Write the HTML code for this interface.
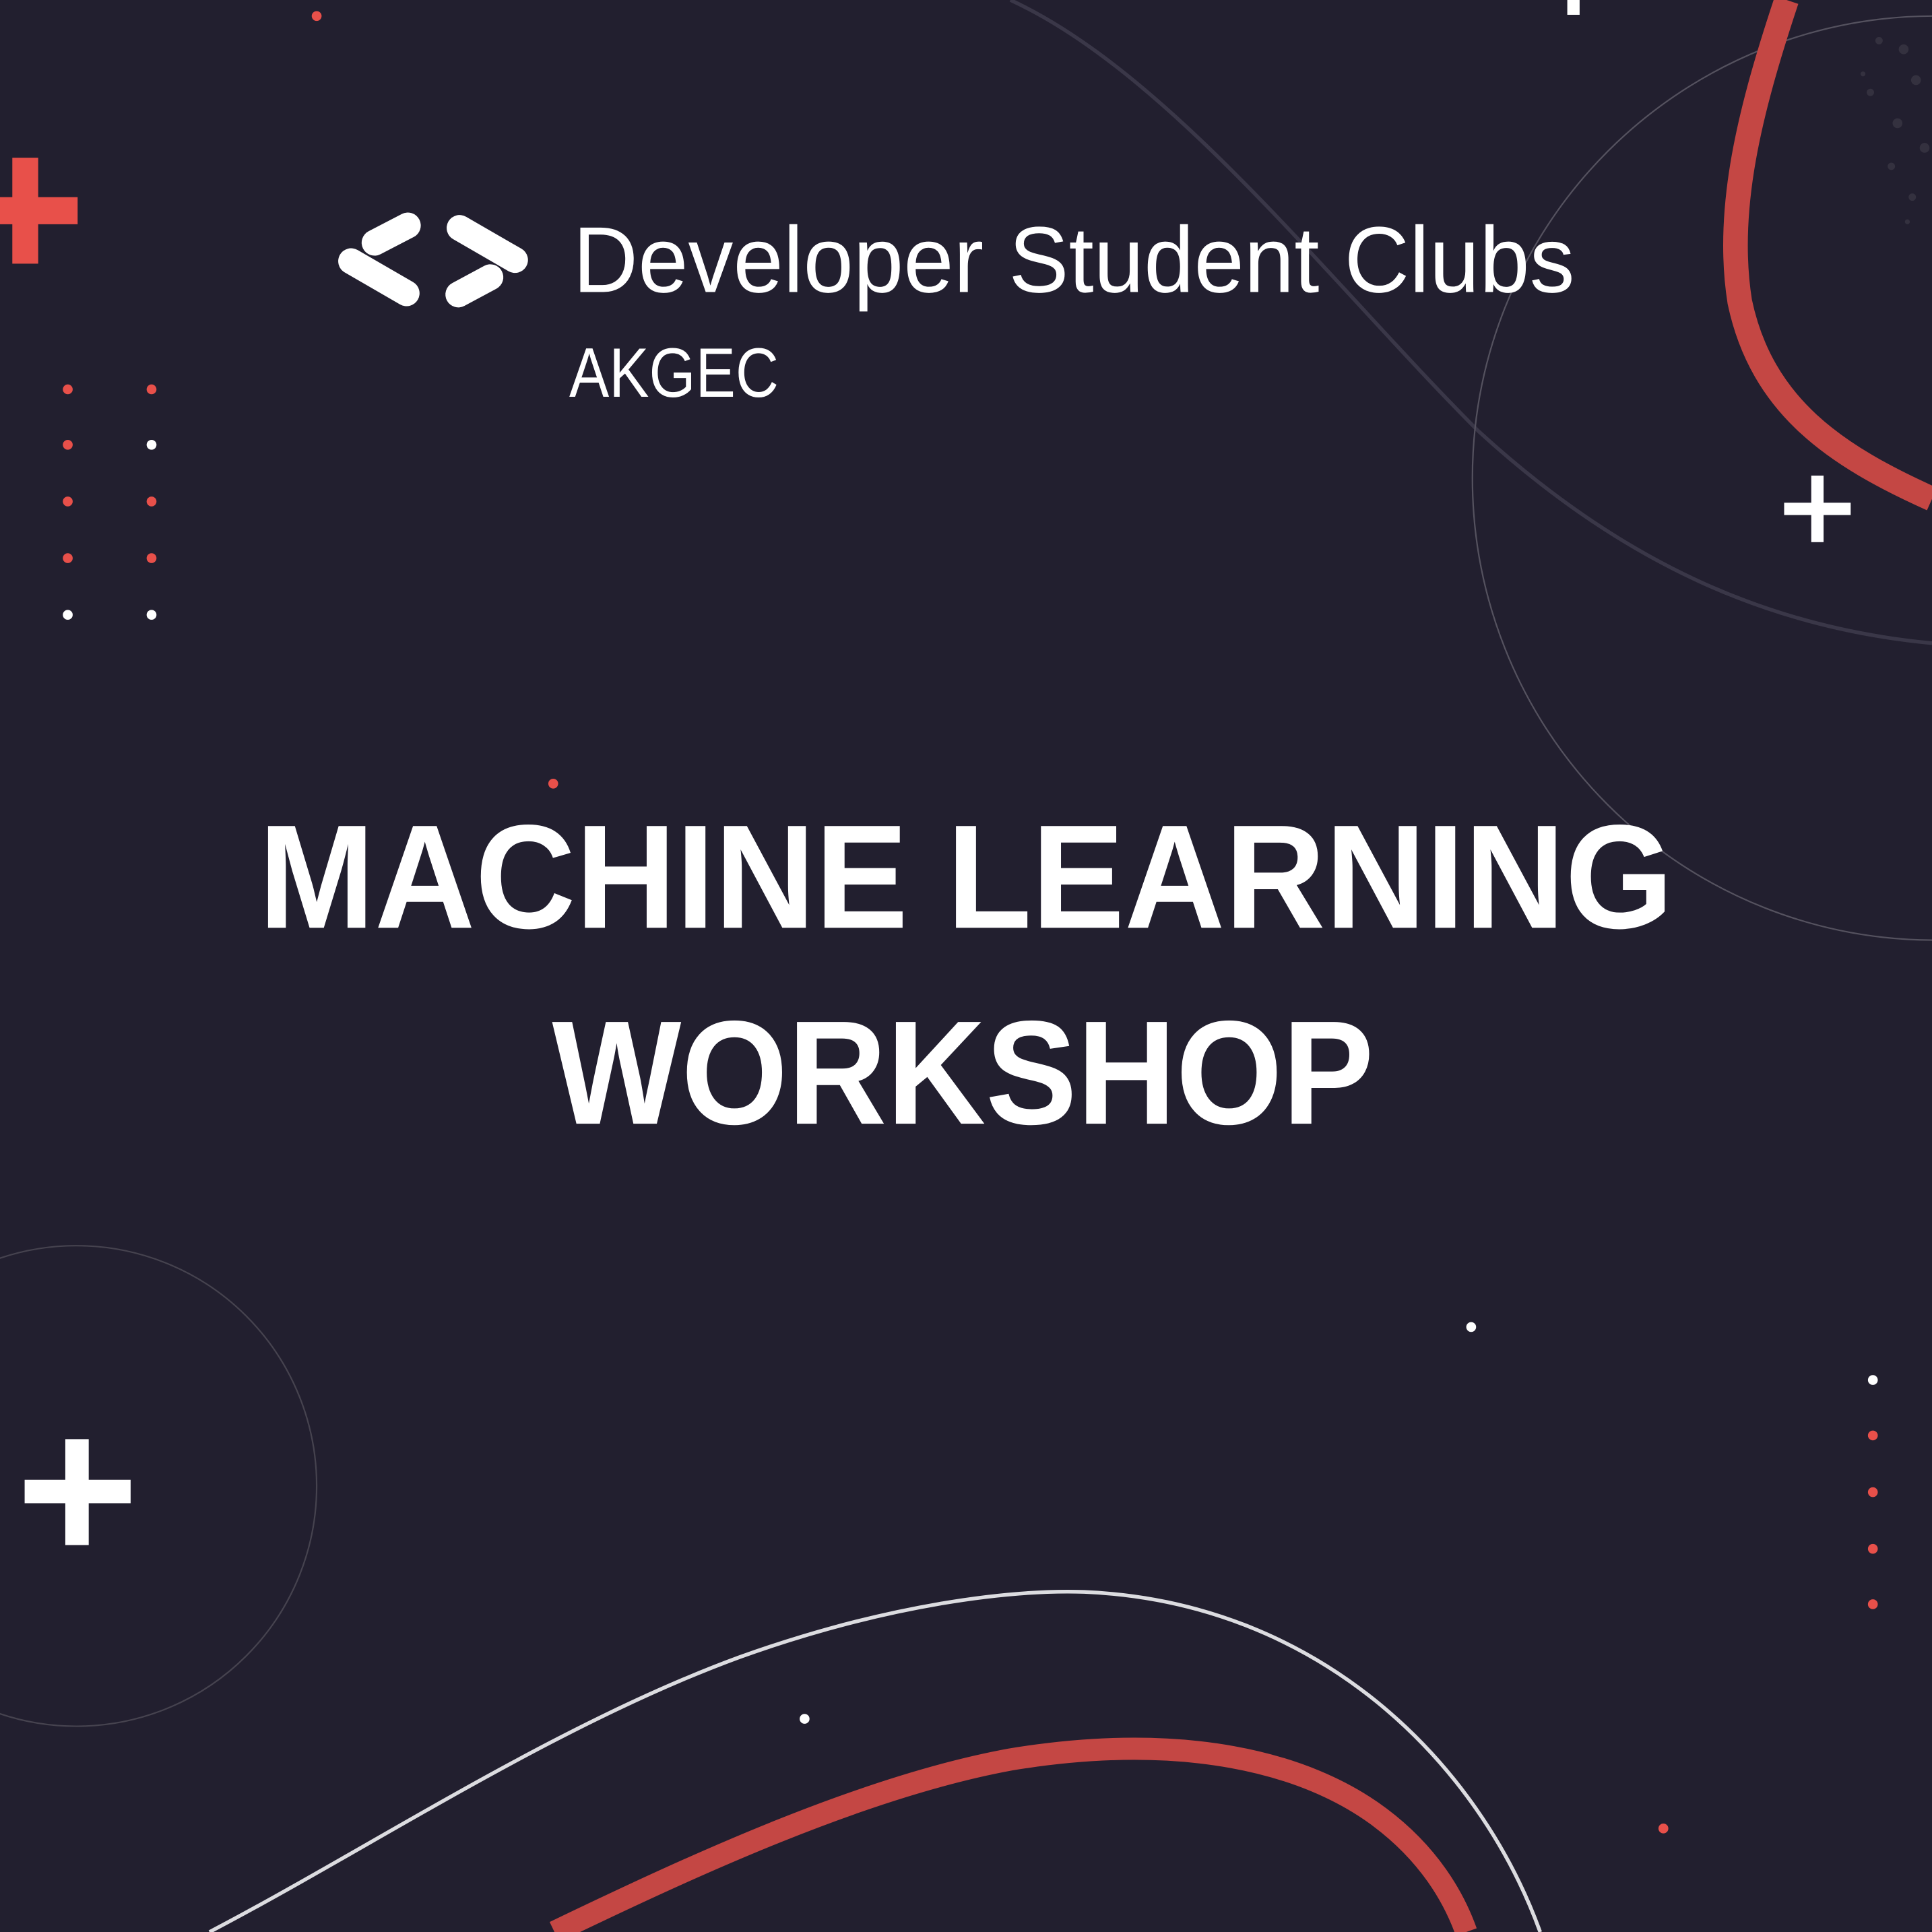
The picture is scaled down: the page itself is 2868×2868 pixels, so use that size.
<!DOCTYPE html>
<html><head><meta charset="utf-8"><style>
html,body{margin:0;padding:0;background:#221f2f;}
svg{display:block;}
</style></head><body>
<svg width="2868" height="2868" viewBox="0 0 1568 1568" xmlns="http://www.w3.org/2000/svg">
<rect width="1568" height="1568" fill="#221f2f"/>
<path d="M820 0 C950 60 1080 230 1200 350 C1320 460 1440 510 1568 522" fill="none" stroke="#3a3748" stroke-width="3"/>
<circle cx="1570" cy="388" r="375" fill="none" stroke="#55525f" stroke-width="1.2"/>
<circle cx="62" cy="1206" r="195" fill="none" stroke="#46434f" stroke-width="1.2"/>
<path d="M1450 0 C1420 90 1400 170 1412 245 C1430 330 1490 370 1568 405" fill="none" stroke="#c44744" stroke-width="20"/>
<g fill="#34313f">
<circle cx="1525" cy="33" r="3"/><circle cx="1545" cy="40" r="4"/><circle cx="1555" cy="65" r="4"/><circle cx="1518" cy="75" r="3"/><circle cx="1540" cy="100" r="4"/><circle cx="1562" cy="120" r="4"/><circle cx="1535" cy="135" r="3"/><circle cx="1552" cy="160" r="3"/><circle cx="1548" cy="180" r="2"/><circle cx="1512" cy="60" r="2"/>
</g>
<path d="M170 1568 C300 1500 450 1400 600 1345 C720 1302 820 1290 880 1292 C1070 1300 1200 1430 1250 1568" fill="none" stroke="#dcdce0" stroke-width="3"/>
<path d="M450 1568 C560 1515 700 1450 820 1428 C960 1405 1060 1430 1120 1475 C1160 1505 1180 1540 1190 1568" fill="none" stroke="#c44744" stroke-width="18"/>
<g fill="#e8504a"><rect x="10" y="128" width="21" height="86"/><rect x="0" y="160" width="63" height="22"/></g>
<g fill="#fff">
<rect x="1470" y="386" width="10" height="54"/><rect x="1448" y="408" width="54" height="10"/>
<rect x="53" y="1168" width="19" height="86"/><rect x="20" y="1201" width="86" height="19"/>
<rect x="1272" y="0" width="10" height="12"/>
</g>
<g fill="#e8504a">
<circle cx="55" cy="316" r="4"/><circle cx="55" cy="361" r="4"/><circle cx="55" cy="407" r="4"/><circle cx="55" cy="453" r="4"/>
<circle cx="123" cy="316" r="4"/><circle cx="123" cy="407" r="4"/><circle cx="123" cy="453" r="4"/>
<circle cx="1520" cy="1165" r="4"/><circle cx="1520" cy="1211" r="4"/><circle cx="1520" cy="1257" r="4"/><circle cx="1520" cy="1302" r="4"/>
<circle cx="257" cy="13" r="4"/><circle cx="449" cy="636" r="4"/><circle cx="1350" cy="1484" r="4"/>
</g>
<g fill="#fff">
<circle cx="55" cy="499" r="4"/><circle cx="123" cy="361" r="4"/><circle cx="123" cy="499" r="4"/>
<circle cx="1520" cy="1120" r="4"/><circle cx="1194" cy="1077" r="4"/><circle cx="653" cy="1395" r="4"/>
</g>
<g stroke="#fff" stroke-width="21" stroke-linecap="round" fill="none">
<line x1="304" y1="197" x2="331" y2="183"/>
<line x1="285" y1="212" x2="330" y2="238"/>
<line x1="373" y1="185" x2="418" y2="211"/>
<line x1="372" y1="239" x2="398" y2="225"/>
</g>
<text x="465" y="237" font-family="Liberation Sans, sans-serif" font-size="76" fill="#fff" textLength="813" lengthAdjust="spacingAndGlyphs">Developer Student Clubs</text>
<text x="462" y="322" font-family="Liberation Sans, sans-serif" font-size="57" fill="#fff" textLength="170" lengthAdjust="spacingAndGlyphs">AKGEC</text>
<g font-family="Liberation Sans, sans-serif" font-weight="bold" font-size="120" fill="#fff">
<text x="210" y="753" textLength="1148" lengthAdjust="spacingAndGlyphs">MACHINE LEARNING</text>
<text x="448" y="912" textLength="667" lengthAdjust="spacingAndGlyphs">WORKSHOP</text>
</g>
</svg>
</body></html>
